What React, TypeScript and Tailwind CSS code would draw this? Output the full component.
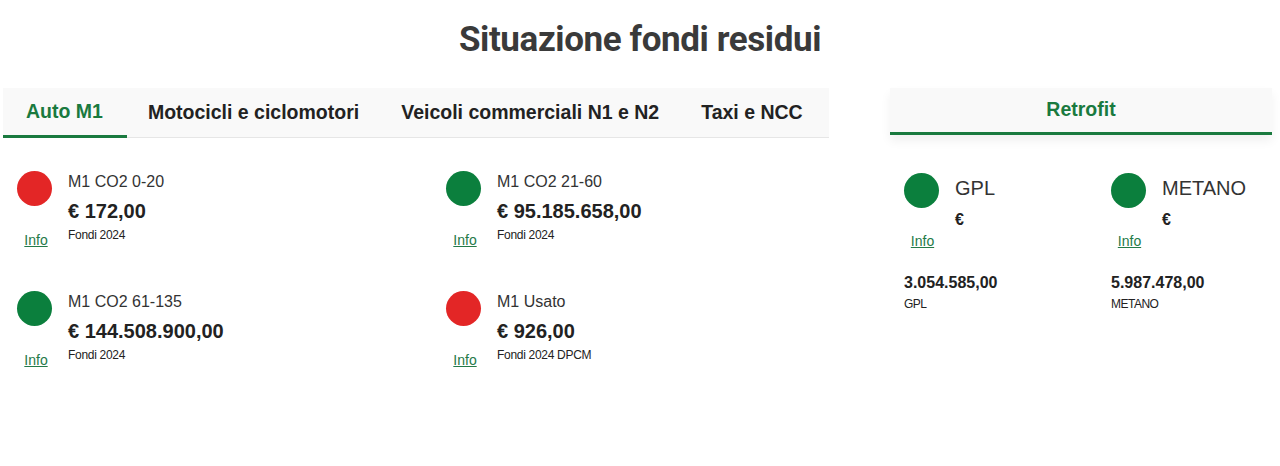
const tabs = ["Auto M1", "Motocicli e ciclomotori", "Veicoli commerciali N1 e N2", "Taxi e NCC"];

const items = [
  { label: "M1 CO2 0-20", amount: "€ 172,00", note: "Fondi 2024", ok: false },
  { label: "M1 CO2 21-60", amount: "€ 95.185.658,00", note: "Fondi 2024", ok: true },
  { label: "M1 CO2 61-135", amount: "€ 144.508.900,00", note: "Fondi 2024", ok: true },
  { label: "M1 Usato", amount: "€ 926,00", note: "Fondi 2024 DPCM", ok: false },
];

const retrofit = [
  { label: "GPL", amount: "3.054.585,00" },
  { label: "METANO", amount: "5.987.478,00" },
];

function Dot({ ok }: { ok: boolean }) {
  return <div className={`w-[35px] h-[35px] rounded-full ${ok ? "bg-[#0b7f3d]" : "bg-[#e32626]"}`} />;
}

export default function App() {
  return (
    <main className="w-[1280px] h-[466px] bg-white font-['Liberation_Sans',Arial,sans-serif] text-[#222]">
      <h1 className="pt-[20px] text-center font-['Roboto',sans-serif] text-[35px] leading-[40px] font-bold text-[#3a3a3a] tracking-[-0.4px]">
        Situazione fondi residui
      </h1>

      <div className="mt-[28px] flex gap-[61px] pl-[3px]">
        {/* Left: tabs + funds */}
        <section className="w-[826px]">
          <nav className="flex h-[50px] bg-[#f9f9f9] border-b border-[#e6e6e6]">
            {tabs.map((t, i) => (
              <div
                key={t}
                className={`flex items-center text-[19.5px] font-bold ${
                  i === 0
                    ? "pl-[23px] pr-[24px] text-[#1a7a3f] border-b-[3px] border-[#1a7a3f] -mb-px"
                    : "px-[21px] text-[#222]"
                }`}
              >
                {t}
              </div>
            ))}
          </nav>

          <div className="grid grid-cols-[429px_1fr] pt-[33px]">
            {items.map((it) => (
              <div key={it.label} className="flex h-[120px] pl-[14px]">
                <div className="flex flex-col items-center w-[35px]">
                  <Dot ok={it.ok} />
                  <a className="mt-[24px] ml-[3px] text-[14px] leading-[20px] text-[#247a48] underline">Info</a>
                </div>
                <div className="ml-[16px] pt-[1px]">
                  <div className="text-[16px] leading-[20px] text-[#333]">{it.label}</div>
                  <div className="mt-[5px] text-[20px] leading-[28px] font-bold text-[#222]">{it.amount}</div>
                  <div className="mt-[2px] text-[12px] leading-[16px] tracking-[-0.3px] text-[#222]">{it.note}</div>
                </div>
              </div>
            ))}
          </div>
        </section>

        {/* Right: retrofit */}
        <aside className="w-[382px]">
          <div className="h-[47px] flex items-center justify-center bg-[#f9f9f9] border-b-[3px] border-[#1a7a3f] shadow-[0_6px_10px_rgba(0,0,0,0.06)] text-[19.5px] font-bold text-[#1a7a3f]">
            Retrofit
          </div>

          <div className="grid grid-cols-[207px_1fr] pt-[38px] pl-[14px]">
            {retrofit.map((r) => (
              <div key={r.label}>
                <div className="flex">
                  <div className="flex flex-col items-center w-[35px]">
                    <Dot ok />
                    <a className="mt-[23px] ml-[2px] text-[14px] leading-[20px] text-[#247a48] underline">Info</a>
                  </div>
                  <div className="ml-[16px] pt-[3px]">
                    <div className="text-[20px] leading-[24px] text-[#333]">{r.label}</div>
                    <div className="mt-[10px] text-[16px] leading-[20px] font-bold">€</div>
                  </div>
                </div>
                <div className="mt-[22px] text-[16px] leading-[20px] font-bold">{r.amount}</div>
                <div className="mt-[3px] text-[12px] leading-[16px] tracking-[-0.5px] text-[#222]">{r.label}</div>
              </div>
            ))}
          </div>
        </aside>
      </div>
    </main>
  );
}
